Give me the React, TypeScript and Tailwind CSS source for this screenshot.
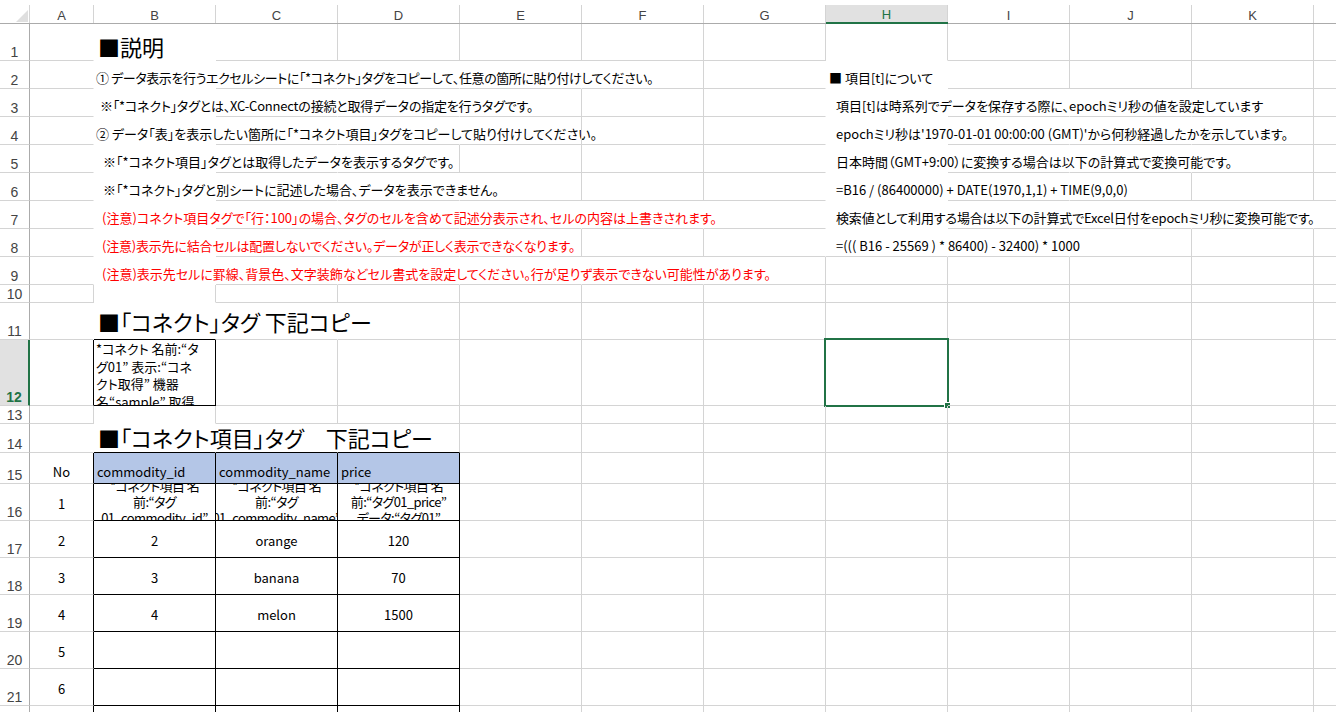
import React from 'react';

type St = 'g' | 'n' | 'k';
type Spec = { box: string; node: React.ReactNode };

const LETTERS = ['A', 'B', 'C', 'D', 'E', 'F', 'G', 'H', 'I', 'J', 'K', 'L'];
const ROWS = Array.from({ length: 22 }, (_, i) => i + 1);

const RCLS: Record<St, string> = {
    g: 'border-r-[#d4d4d4]',
    n: 'border-r-transparent',
    k: 'border-r-black',
};
const BCLS: Record<St, string> = {
    g: 'border-b-[#d4d4d4]',
    n: 'border-b-transparent',
    k: 'border-b-black',
};

// gridlines hidden by white fill or overflowing text
const HIDE_RIGHT: Record<number, number[]> = {
    0: [1, 2, 3, 4, 5, 6, 7, 8, 9, 11, 14],
    1: [1, 2, 3, 4, 5, 6, 7, 8, 9, 11, 14],
    2: [2, 3, 4, 5, 6, 7, 8, 9, 11, 14],
    3: [2, 3, 4, 6, 7, 8, 9],
    4: [2, 7, 9],
    5: [7, 9],
    6: [2, 3, 4, 5, 6, 7, 8],
    7: [2, 3, 4, 5, 6, 7, 8],
    8: [3, 4, 5, 6, 7, 8],
    9: [3, 4, 5, 7],
    10: [7],
};

const rightOf = (r: number, c: number): St => {
    if (r >= 15 && c <= 3) return 'k';
    if (r === 12 && c <= 1) return 'k';
    return HIDE_RIGHT[c]?.includes(r) ? 'n' : 'g';
};

const bottomOf = (r: number, c: number): St => {
    if (c >= 1 && c <= 3 && r >= 14) return 'k';
    if (c === 1 && (r === 11 || r === 12)) return 'k';
    if (c === 1 && (r <= 10 || r === 13)) return 'n';
    if (c === 7 && r <= 7) return 'n';
    return 'g';
};

const NOTES = [
    { t: '① データ表示を行うエクセルシートに「*コネクト」タグをコピーして、任意の箇所に貼り付けしてください。', ind: 'pl-[2px] tracking-[-0.4px]', red: false },
    { t: '※「*コネクト」タグとは、XC-Connectの接続と取得データの指定を行うタグです。', ind: 'pl-[6px] tracking-[-0.2px]', red: false },
    { t: '② データ「表」を表示したい箇所に「*コネクト項目」タグをコピーして貼り付けしてください。', ind: 'pl-[2px]', red: false },
    { t: '※「*コネクト項目」タグとは取得したデータを表示するタグです。', ind: 'pl-[9px]', red: false },
    { t: '※「*コネクト」タグと別シートに記述した場合、データを表示できません。', ind: 'pl-[9px]', red: false },
    { t: '(注意)コネクト項目タグで「行：100」の場合、タグのセルを含めて記述分表示され、セルの内容は上書きされます。', ind: 'pl-[8px]', red: true },
    { t: '(注意)表示先に結合セルは配置しないでください。データが正しく表示できなくなります。', ind: 'pl-[8px] tracking-[-0.2px]', red: true },
    { t: '(注意)表示先セルに罫線、背景色、文字装飾などセル書式を設定してください。行が足りず表示できない可能性があります。', ind: 'pl-[8px]', red: true },
];

const EPOCH = [
    { t: '■ 項目[t]について', ind: 'pl-[3px]' },
    { t: '項目[t]は時系列でデータを保存する際に、epochミリ秒の値を設定しています', ind: 'pl-[10px]' },
    { t: "epochミリ秒は'1970-01-01 00:00:00 (GMT)'から何秒経過したかを示しています。", ind: 'pl-[10px]' },
    { t: '日本時間（GMT+9:00）に変換する場合は以下の計算式で変換可能です。', ind: 'pl-[10px]' },
    { t: '=B16 / (86400000) + DATE(1970,1,1) + TIME(9,0,0)', ind: 'pl-[10px]' },
    { t: '検索値として利用する場合は以下の計算式でExcel日付をepochミリ秒に変換可能です。', ind: 'pl-[10px] tracking-[-0.15px]' },
    { t: '=((( B16 - 25569 ) * 86400) - 32400) * 1000', ind: 'pl-[10px]' },
];

const line = (t: string, cls = 'text-black') => (
    <span className={`whitespace-nowrap text-[13px] leading-[17px] ${cls}`}>{t}</span>
);

const heading = (t: string) => (
    <span className="whitespace-nowrap text-[22px] leading-[26px] text-black">{t}</span>
);

const wrapped = (lines: string[]) => (
    <div className="text-center text-[13px] leading-[16px] tracking-[-0.6px] whitespace-nowrap">
        {lines.map((l, i) => (
            <div key={i}>{l}</div>
        ))}
    </div>
);

function buildSpecs(): Record<string, Spec> {
    const s: Record<string, Spec> = {};
    s['1-1'] = { box: 'items-end pb-[1px] pl-[4px]', node: heading('■説明') };
    NOTES.forEach((n, i) => {
        s[`${i + 2}-1`] = {
            box: `items-end pb-[2px] ${n.ind}`,
            node: line(n.t, n.red ? 'text-[#ff0000]' : 'text-black'),
        };
    });
    EPOCH.forEach((n, i) => {
        s[`${i + 2}-7`] = { box: `items-end pb-[2px] ${n.ind}`, node: line(n.t) };
    });
    s['11-1'] = { box: 'items-end pb-[5px] pl-[4px]', node: heading('■「コネクト」タグ  下記コピー') };
    s['12-1'] = {
        box: 'items-start pl-[2px] overflow-hidden',
        node: (
            <div className="text-[13px] leading-[17.5px] whitespace-nowrap">
                <div>*コネクト 名前:“タ</div>
                <div>グ01” 表示:“コネ</div>
                <div>クト取得” 機器</div>
                <div>名“sample” 取得</div>
            </div>
        ),
    };
    s['14-1'] = { box: 'items-end pb-[2px] pl-[4px]', node: heading('■「コネクト項目」タグ　下記コピー') };

    s['15-0'] = { box: 'items-end justify-center pb-[3px]', node: line('No') };
    ['commodity_id', 'commodity_name', 'price'].forEach((h, i) => {
        s[`15-${i + 1}`] = { box: 'items-end pb-[3px] pl-[3px] bg-[#b4c6e7]', node: line(h) };
    });
    for (let n = 1; n <= 6; n++) {
        s[`${n + 15}-0`] = { box: 'items-center justify-center pt-[2px]', node: line(String(n)) };
    }
    s['16-1'] = { box: 'items-center justify-center overflow-hidden', node: wrapped(['*コネクト項目 名', '前:“タグ', '01_commodity_id”']) };
    s['16-2'] = { box: 'items-center justify-center overflow-hidden', node: wrapped(['*コネクト項目 名', '前:“タグ', '01_commodity_name”']) };
    s['16-3'] = { box: 'items-center justify-center overflow-hidden', node: wrapped(['*コネクト項目 名', '前:“タグ01_price”', 'データ:“タグ01”']) };

    const data = [
        ['2', 'orange', '120'],
        ['3', 'banana', '70'],
        ['4', 'melon', '1500'],
    ];
    data.forEach((row, i) => {
        row.forEach((v, j) => {
            s[`${i + 17}-${j + 1}`] = { box: 'items-center justify-center pt-[3px]', node: line(v) };
        });
    });
    return s;
}

const ColHeader: React.FC<{ letter: string; sel: boolean }> = ({ letter, sel }) => (
    <div className={`flex flex-col ${sel ? 'border-b-2 border-b-[#217346]' : 'border-b border-b-[#ababab]'}`}>
        <div
            className={`mt-[5px] flex-1 border-r border-r-[#d4d4d4] flex items-end justify-center text-[13px] leading-[14px] ${
                sel ? 'bg-[#e1e1e1] text-[#217346]' : 'text-[#444444]'
            }`}
        >
            {letter}
        </div>
    </div>
);

export default function App() {
    const specs = buildSpecs();

    return (
        <div className="w-[1336px] h-[712px] overflow-hidden bg-white font-['Liberation_Sans',sans-serif]">
            <div className="grid grid-cols-[30px_64px_repeat(10,122px)_122px] grid-rows-[24px_37px_repeat(8,28px)_18px_37px_66px_18px_29px_31px_repeat(7,37px)]">
                {/* corner */}
                <div className="flex flex-col border-b border-b-[#ababab]">
                    <div className="mt-[5px] flex-1 border-r border-r-[#d4d4d4] flex items-end justify-end pr-[1px] pb-[1px]">
                        <svg width="12" height="12" viewBox="0 0 12 12">
                            <polygon points="12,0 12,12 0,12" fill="#dfdfdf" />
                        </svg>
                    </div>
                </div>
                {LETTERS.map((l) => (
                    <ColHeader key={l} letter={l} sel={l === 'H'} />
                ))}

                {ROWS.map((r) => (
                    <React.Fragment key={r}>
                        <div
                            className={`flex items-end justify-center border-b border-b-[#d4d4d4] text-[14px] leading-[16px] ${
                                r === 12
                                    ? 'bg-[#e1e1e1] border-r-2 border-r-[#217346] text-[#217346] font-bold'
                                    : 'border-r border-r-[#ababab] text-[#444444]'
                            }`}
                        >
                            {r}
                        </div>
                        {LETTERS.map((_, c) => {
                            const sp = specs[`${r}-${c}`];
                            const sel = r === 12 && c === 7;
                            return (
                                <div
                                    key={c}
                                    className={`relative flex min-w-0 min-h-0 border-r border-b font-['Noto_Sans_CJK_JP',sans-serif] [font-feature-settings:'palt'] ${RCLS[rightOf(r, c)]} ${BCLS[bottomOf(r, c)]} ${sp ? sp.box : ''}`}
                                >
                                    {sp?.node}
                                    {sel && (
                                        <>
                                            <div className="absolute -left-[2px] -top-[2px] w-[125px] h-[69px] border-2 border-[#217346]" />
                                            <div className="absolute left-[118px] top-[62px] w-[7px] h-[7px] bg-[#217346] border border-white" />
                                        </>
                                    )}
                                </div>
                            );
                        })}
                    </React.Fragment>
                ))}
            </div>
        </div>
    );
}
